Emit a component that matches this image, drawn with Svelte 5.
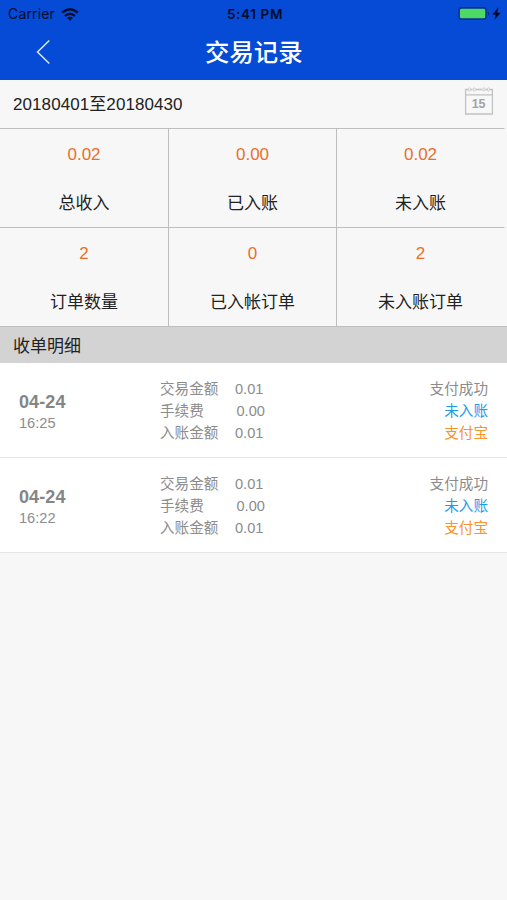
<script>
  const stats = [
    { value: '0.02', label: '总收入' },
    { value: '0.00', label: '已入账' },
    { value: '0.02', label: '未入账' },
    { value: '2', label: '订单数量' },
    { value: '0', label: '已入帐订单' },
    { value: '2', label: '未入账订单' }
  ];
  const orders = [
    { date: '04-24', time: '16:25', amount: '0.01', fee: '0.00', net: '0.01' },
    { date: '04-24', time: '16:22', amount: '0.01', fee: '0.00', net: '0.01' }
  ];
</script>

<div class="screen">
  <header>
    <div class="status">
      <div class="carrier">
        <span>Carrier</span>
        <svg width="18" height="13" viewBox="0 0 18 13">
          <g fill="none" stroke="#020b2c" stroke-width="2.3">
            <path d="M1.2 4.7Q9-2.1 16.8 4.7" />
            <path d="M4 8Q9 3.7 14 8" />
          </g>
          <path d="M6.1 9.9Q9 7.7 11.9 9.9L9 12.7Z" fill="#020b2c" />
        </svg>
      </div>
      <div class="clock">5:41 PM</div>
      <div class="battery">
        <svg width="44" height="14" viewBox="0 0 44 14">
          <rect x="1.1" y="0.9" width="27" height="11.2" rx="2.4" fill="#4cd964" stroke="#03309a" stroke-width="1.6" />
          <path d="M30.2 4.8Q31.8 6.6 30.2 8.4Z" fill="#020b2c" />
          <path d="M40.2 0.8L34.8 7.4H38L36.8 12.4L42.2 5.9H38.9Z" fill="#020b2c" stroke="#020b2c" stroke-width="0.4" />
        </svg>
      </div>
    </div>
    <div class="nav">
      <svg class="back" width="16" height="26" viewBox="0 0 16 26">
        <path d="M14.3 1.5L2.5 13L14.3 24.5" fill="none" stroke="#dce7ff" stroke-width="1.5" />
      </svg>
      <h1>交易记录</h1>
    </div>
  </header>

  <div class="period">
    <span>20180401至20180430</span>
    <svg width="30" height="30" viewBox="0 0 30 30">
      <g fill="none" stroke="#c2c2c2" stroke-width="1.3">
        <path d="M4.5 3.5H1.6V28H28.4V3.5H25.5M1.6 8.8H28.4" />
        <path d="M7 3.5H8.5M12 3.5H18M21.5 3.5H23" />
      </g>
      <g fill="#f7f7f7" stroke="#c6c6c6" stroke-width="0.8">
        <rect x="4.5" y="1.8" width="2" height="3.4" rx="1" />
        <rect x="9.3" y="1.8" width="2" height="3.4" rx="1" />
        <rect x="18.8" y="1.8" width="2" height="3.4" rx="1" />
        <rect x="23.5" y="1.8" width="2" height="3.4" rx="1" />
      </g>
      <text x="14.6" y="22.4" text-anchor="middle">15</text>
    </svg>
  </div>

  <div class="stats">
    {#each stats as s}
      <div class="stat">
        <div class="value">{s.value}</div>
        <div class="label">{s.label}</div>
      </div>
    {/each}
  </div>

  <div class="section">收单明细</div>

  {#each orders as o}
    <div class="order">
      <div class="when">
        <div class="date">{o.date}</div>
        <div class="time">{o.time}</div>
      </div>
      <div class="amounts">
        <div><span class="name">交易金额</span><span>{o.amount}</span></div>
        <div class="fee"><span class="name">手续费</span><span>{o.fee}</span></div>
        <div><span class="name">入账金额</span><span>{o.net}</span></div>
      </div>
      <div class="state">
        <div>支付成功</div>
        <div class="pending">未入账</div>
        <div class="channel">支付宝</div>
      </div>
    </div>
  {/each}
</div>

<style>
  :global(body) { margin: 0; background: #f7f7f7; }
  .screen {
    width: 507px;
    height: 900px;
    overflow: hidden;
    background: #f7f7f7;
    font-family: "Liberation Sans", "Noto Sans CJK SC", sans-serif;
    color: #222;
  }
  svg { display: block; }
  header { height: 80px; background: #054bd5; }
  .status {
    display: grid;
    grid-template-columns: 1fr auto 1fr;
    height: 27px;
    align-items: center;
    padding: 0 5px 0 8px;
    box-sizing: border-box;
    color: #020b2c;
    font: 14px/27px Inter, "Liberation Sans", sans-serif;
  }
  .carrier { display: flex; align-items: center; gap: 6px; height: 26px; line-height: 26px; letter-spacing: 0.15px; }
  .clock { font-size: 13.6px; font-weight: 600; letter-spacing: 0.6px; line-height: 28px; }
  .battery { justify-self: end; }
  .nav { display: flex; align-items: center; height: 50px; padding-left: 35px; }
  h1 {
    margin: 2px 0 0 154px;
    font-size: 24.4px;
    line-height: 50px;
    font-weight: 500;
    color: #fff;
  }
  .period {
    display: flex;
    justify-content: space-between;
    height: 48px;
    padding: 0 13px;
    font-size: 17px;
    line-height: 49px;
  }
  .period span { letter-spacing: 0.08px; }
  .period svg { margin-top: 6px; }
  .period text { font: bold 12.5px/1 "Liberation Sans", sans-serif; fill: #a3a3a3; }
  .stats {
    display: grid;
    grid-template-columns: 169px 168px 168px;
    grid-auto-rows: 99px;
    width: 505px;
  }
  .stat {
    box-sizing: border-box;
    border-top: 1px solid #bebebe;
    border-right: 1px solid #bebebe;
    padding-top: 13px;
    text-align: center;
    font-size: 17px;
    line-height: 25px;
  }
  .stat:nth-child(3n) { border-right-color: transparent; }
  .value { color: #e8702a; }
  .label { margin-top: 24px; }
  .section {
    height: 37px;
    box-sizing: border-box;
    border-top: 1px solid #bebebe;
    padding: 1px 0 0 13px;
    background: #d3d3d3;
    font-size: 17px;
    line-height: 37px;
  }
  .order {
    display: flex;
    height: 95px;
    box-sizing: border-box;
    padding: 15px 19px 0;
    border-bottom: 1px solid #e6e6e6;
    background: #fff;
    color: #8c8c8c;
    font-size: 14.6px;
    line-height: 22px;
  }
  .when { width: 141px; padding-top: 14px; }
  .date { font-size: 18px; font-weight: bold; line-height: 21px; color: #858585; letter-spacing: 0.1px; }
  .time { line-height: 20px; }
  .amounts > div { display: flex; }
  .name { width: 75px; }
  .fee .name { width: 76.5px; }
  .state { margin-left: auto; text-align: right; }
  .pending { color: #1c9bec; }
  .channel { color: #f8932a; }
</style>
